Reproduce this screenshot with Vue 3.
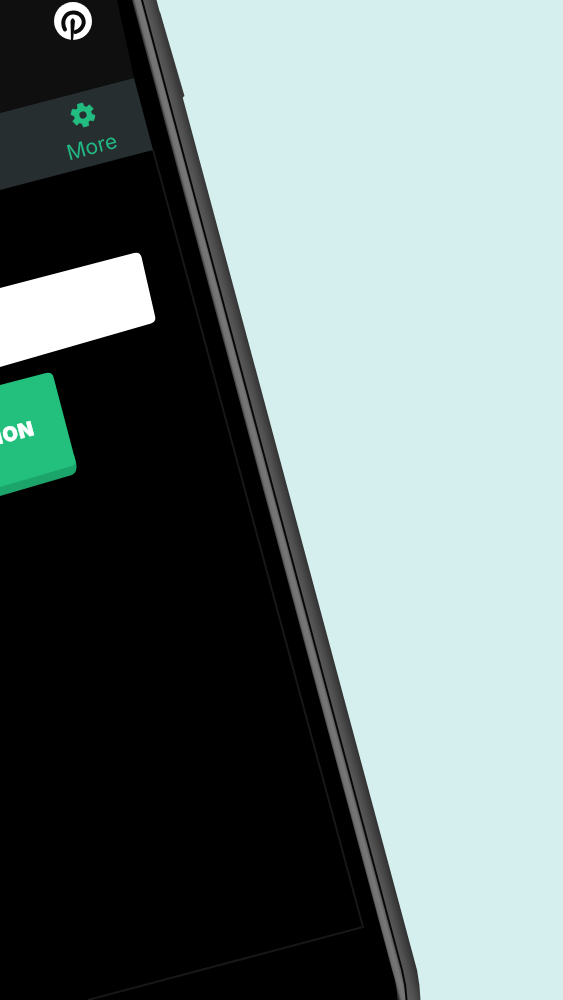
<template>
  <svg class="stage" viewBox="0 0 563 1000" width="563" height="1000" xmlns="http://www.w3.org/2000/svg">
    <defs>
      <linearGradient id="outerBand" gradientUnits="userSpaceOnUse" x1="141" y1="0" x2="156" y2="-4">
        <stop offset="0" stop-color="#5c5c5d" />
        <stop offset="0.45" stop-color="#505051" />
        <stop offset="1" stop-color="#343435" />
      </linearGradient>
      <linearGradient id="rimBand" gradientUnits="userSpaceOnUse" x1="132" y1="0" x2="141" y2="-2.4">
        <stop offset="0" stop-color="#2c2c2d" />
        <stop offset="0.3" stop-color="#707071" />
        <stop offset="0.75" stop-color="#787879" />
        <stop offset="1" stop-color="#5e5e5f" />
      </linearGradient>
    </defs>
    <rect class="backdrop" width="563" height="1000" />

    <path class="side-button" d="M157 11 L160 12 L184.5 96 L182 98 Z" />
    <path fill="url(#outerBand)" d="M156.5 0 L417 970 Q420 985 420.5 1000 L0 1000 L0 0 Z" />
    <path class="seam" d="M143 0 L403 970 Q407 985 407.5 1000 L0 1000 L0 0 Z" />
    <path fill="url(#rimBand)" d="M141 0 L401 970 Q405 985 405.5 1000 L0 1000 L0 0 Z" />
    <path class="screen" d="M132 0 L392 970 Q397 985 397.5 1000 L0 1000 L0 0 Z" />

    <path class="header" d="M117 0 L134 78 L0 113 L0 0 Z" />
    <path class="navbar" d="M134 78 L153 150 L0 190 L0 113 Z" />
    <path class="inset" d="M153 150 L363 927 L88 1000" />

    <circle class="pin-disc" cx="73" cy="21" r="19" />
    <path class="pin-arc" d="M65 29.5 C60.5 21 65.5 12 74 12.5 C82.5 13 86.5 22 81.5 28 C80 30 78 31.5 75.5 32" />
    <path class="pin-stem" d="M70.5 21 Q72.8 15.5 75 21 L73 41 L71 41 Z" />

    <g transform="translate(83 115) rotate(-15)">
      <path class="gear" :d="gearPath" />
      <circle class="gear-hole" r="3.6" />
    </g>
    <text class="tab-label" transform="translate(69 160.5) rotate(-15)">More</text>
    <text class="tab-label" transform="translate(-9 180) rotate(-15)">s</text>

    <path class="field" d="M0 288 L134 253 Q140 251.5 141.5 257 L155 316 Q156.5 322 151 323.5 L0 367 Z" />

    <path class="cta-lip" d="M0 470 L74 455 L76.2 463 Q78 472 72 475 L0 496 Z" />
    <path class="cta" d="M0 385 L46 373 Q52 372 53.5 377 L75.5 461 Q76 464 72 466 L0 487 Z" />
    <text class="cta-label" text-anchor="end" transform="translate(35.5 434.5) rotate(-15)">ION</text>
  </svg>
</template>

<script setup>
const teeth = 6
const outer = 12
const root = 8.6
const points = []
for (let i = 0; i < teeth; i++) {
  const mid = (i * 360) / teeth - 90
  const offsets = [
    [-21, root],
    [-13, outer],
    [13, outer],
    [21, root],
  ]
  for (const [da, r] of offsets) {
    const a = ((mid + da) * Math.PI) / 180
    points.push(`${(r * Math.cos(a)).toFixed(2)} ${(r * Math.sin(a)).toFixed(2)}`)
  }
}
const gearPath = `M${points.join(' L')} Z`
</script>

<style>
html,
body {
  margin: 0;
  background: #d4efee;
}
</style>

<style scoped>
.stage {
  display: block;
  filter: blur(0.5px);
}
.backdrop {
  fill: #d4efee;
}
.side-button {
  fill: #3a3a3b;
}
.seam {
  fill: #070707;
}
.screen {
  fill: #000;
}
.header {
  fill: #0f0f10;
}
.navbar {
  fill: #262e30;
}
.inset {
  fill: none;
  stroke: #171717;
  stroke-width: 2;
}
.pin-disc {
  fill: #fff;
}
.pin-arc {
  fill: none;
  stroke: #0a0a0a;
  stroke-width: 4;
  stroke-linecap: round;
}
.pin-stem {
  fill: #0a0a0a;
}
.gear {
  fill: #22bb80;
  stroke: #22bb80;
  stroke-width: 0.8;
  stroke-linejoin: round;
}
.gear-hole {
  fill: #262e30;
}
.tab-label {
  fill: #22b883;
  font-family: Inter, "Open Sans", sans-serif;
  font-size: 21px;
}
.field {
  fill: #fff;
}
.cta {
  fill: #23c07d;
}
.cta-lip {
  fill: #1ca56b;
}
.cta-label {
  fill: #fff;
  stroke: #fff;
  stroke-width: 0.5;
  font-family: Inter, "Liberation Sans", sans-serif;
  font-size: 20px;
  font-weight: 900;
  letter-spacing: 0.6px;
}
</style>
